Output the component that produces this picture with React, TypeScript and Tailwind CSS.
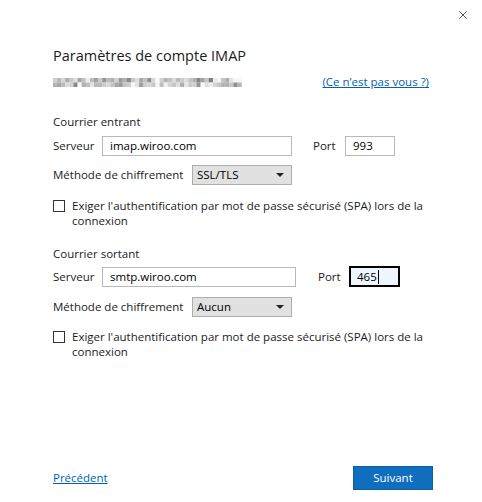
import { X } from "lucide-react";

const font = { fontFamily: '"Open Sans", "Noto Sans", sans-serif' };

// pixelated e-mail address (blurred in the screenshot)
const shades = [
  "#cfcfcf", "#b8b8b8", "#d4d4d4", "#acacac", "#c6c6c6", "#dedede", "#a6a6a6", "#c2c2c2", "#efefef", "#bdbdbd",
  "#a0a0a0", "#cacaca", "#959595", "#b9b9b9", "#adadad", "#d2d2d2", "#9c9c9c", "#b3b3b3", "#8a8a8a", "#c8c8c8",
  "#e0e0e0", "#a9a9a9", "#c0c0c0", "#909090", "#d8d8d8", "#f8f8f8", "#d0d0d0", "#b4b4b4", "#c1c1c1", "#dadada",
  "#bcbcbc", "#cbcbcb", "#dcdcdc", "#c2c2c2", "#b0b0b0", "#858585", "#a4a4a4", "#c7c7c7", "#7c7c7c", "#ebebeb",
  "#f4f4f4", "#c6c6c6", "#adadad", "#e4e4e4", "#f6f6f6", "#f6f6f6",
];

function Blurred() {
  return (
    <svg width="190" height="9" viewBox="0 0 190 9" aria-hidden>
      {shades.map((c, i) => (
        <g key={i}>
          <rect x={i * 4.1} y={0} width={4.2} height={4.5} fill={c} />
          <rect x={i * 4.1} y={4.5} width={4.2} height={4.5} fill={shades[(i * 7 + 3) % shades.length]} opacity={0.9} />
        </g>
      ))}
    </svg>
  );
}

function TextBox({ value, width, active }: { value: string; width: string; active?: boolean }) {
  if (active) {
    return (
      <div className={`flex h-[21px] items-center border-2 border-black bg-[#eef5fd] pl-[6px] text-[11.5px] text-black ${width}`}>
        {value}
        <span className="ml-px h-[14px] w-px bg-black" />
      </div>
    );
  }
  return (
    <div className={`flex h-[20px] items-center border border-[#b9b9b9] bg-white pl-[7px] text-[11.5px] text-black ${width}`}>
      {value}
    </div>
  );
}

function Dropdown({ value }: { value: string }) {
  return (
    <div className="flex h-[20px] w-[100px] items-center justify-between border border-[#adadad] bg-[#e1e1e1] pl-[4px] pr-[7px] text-[11.5px] text-black">
      <span>{value}</span>
      <svg width="8" height="4" viewBox="0 0 8 4" aria-hidden>
        <path d="M0 0h8L4 4z" fill="#222" />
      </svg>
    </div>
  );
}

function Checkbox() {
  return (
    <div className="flex items-start gap-[7px]">
      <span className="mt-[2px] h-[12px] w-[12px] shrink-0 border border-[#333] bg-white" />
      <span className="whitespace-nowrap text-[11.5px] leading-[15px]">
        Exiger l'authentification par mot de passe sécurisé (SPA) lors de la
        <br />
        connexion
      </span>
    </div>
  );
}

export default function App() {
  return (
    <div className="relative flex h-[502px] w-[482px] flex-col bg-white text-[#1b1b1b]" style={font}>
      <button className="absolute right-[12px] top-[8px] text-[#333]" aria-label="Fermer">
        <X className="h-[14px] w-[14px]" strokeWidth={1.4} />
      </button>

      <div className="flex flex-col px-[53px] pt-[46px]">
        <h1 className="text-[14.5px] leading-[20px]">Paramètres de compte IMAP</h1>
        <div className="mt-[10px] flex h-[12px] items-center justify-between">
          <Blurred />
          <a href="#" className="text-[11.5px] text-[#0063b1] underline">
            (Ce n’est pas vous ?)
          </a>
        </div>

        <div className="mt-[26px] text-[11.5px] leading-[16px]">Courrier entrant</div>
        <div className="mt-[5px] flex h-[21px] items-center text-[11.5px]">
          <span className="w-[49px]">Serveur</span>
          <TextBox value="imap.wiroo.com" width="w-[190px]" />
          <span className="ml-[21px] w-[32px]">Port</span>
          <TextBox value="993" width="w-[50px]" />
        </div>
        <div className="mt-[9px] flex h-[20px] items-center text-[11.5px]">
          <span className="w-[139px]">Méthode de chiffrement</span>
          <Dropdown value="SSL/TLS" />
        </div>
        <div className="mt-[13px]">
          <Checkbox />
        </div>

        <div className="mt-[18px] text-[11.5px] leading-[16px]">Courrier sortant</div>
        <div className="mt-[4px] flex h-[21px] items-center text-[11.5px]">
          <span className="w-[49px]">Serveur</span>
          <TextBox value="smtp.wiroo.com" width="w-[194px]" />
          <span className="ml-[22px] w-[31px]">Port</span>
          <TextBox value="465" width="w-[51px]" active />
        </div>
        <div className="mt-[10px] flex h-[20px] items-center text-[11.5px]">
          <span className="w-[139px]">Méthode de chiffrement</span>
          <Dropdown value="Aucun" />
        </div>
        <div className="mt-[12px]">
          <Checkbox />
        </div>
      </div>

      <div className="mt-auto flex items-center justify-between pb-[12px] pl-[53px] pr-[49px]">
        <a href="#" className="text-[11.5px] text-[#0063b1] underline">
          Précédent
        </a>
        <button className="h-[24px] w-[80px] border border-[#0d5ea3] bg-[#106ebe] text-[11.5px] text-white">
          Suivant
        </button>
      </div>
    </div>
  );
}
